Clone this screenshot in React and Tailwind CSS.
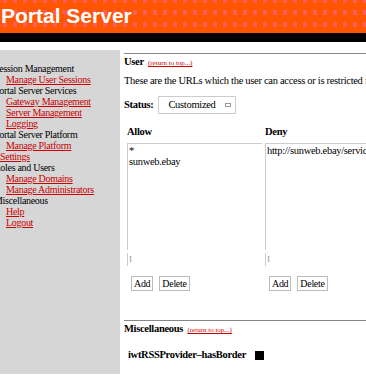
const serif = { fontFamily: '"Liberation Serif", "Times New Roman", serif' };

const SideHead = ({ children }) => (
  <div className="-ml-[6px] text-black whitespace-nowrap">{children}</div>
);

const SideLink = ({ children }) => (
  <div className="indent-[6px]">
    <a href="#" className="text-[#cc0000] underline">{children}</a>
  </div>
);

const ReturnTop = () => (
  <a href="#" className="ml-[2px] text-[7px] tracking-normal font-normal text-[#cc0000] underline">(return to top...)</a>
);

const Btn = ({ children }) => (
  <button className="h-[15px] px-[2px] border border-[#bbbbbb] bg-white text-[10px] tracking-[-0.3px] leading-none text-black">
    {children}
  </button>
);

const ListColumn = ({ title, items, width }) => (
  <div className="flex flex-col shrink-0" style={{ width }}>
    <div className="font-bold h-[12px] leading-[12px]">{title}</div>
    <div className="mt-[5px] h-[107px] border-t border-l border-[#cccccc] pt-[1px] pl-[1px] leading-[11px] whitespace-nowrap overflow-hidden">
      {items.map((it) => (
        <div key={it}>{it}</div>
      ))}
    </div>
    <div className="mt-[3px] h-[13px] w-[8px] border-l border-[#cccccc] text-[#999] pl-[1px] leading-[13px] text-[9px]">I</div>
    <div className="mt-[10px] ml-[4px] flex gap-[6px]">
      <Btn>Add</Btn>
      <Btn>Delete</Btn>
    </div>
  </div>
);

export default function App() {
  return (
    <div className="w-[366px] h-[378px] overflow-hidden bg-white text-black" style={serif}>
      {/* Banner */}
      <div className="relative h-[33px] bg-[#ff5500] overflow-hidden">
        <svg className="absolute inset-0" width="366" height="33">
          <defs>
            <pattern id="dots" x="3" y="-2" width="10" height="12" patternUnits="userSpaceOnUse">
              <rect x="0" y="0" width="4" height="5" fill="#ff5c5c" />
            </pattern>
          </defs>
          <rect width="366" height="33" fill="url(#dots)" />
        </svg>
        <div
          className="relative pl-[1px] pt-[3px] text-white font-bold text-[21px] leading-[26px]"
          style={{ fontFamily: '"Liberation Sans", Arial, sans-serif' }}
        >
          Portal Server
        </div>
      </div>
      <div className="h-[9px] bg-black" />

      <div className="flex mt-[8px]">
        {/* Sidebar */}
        <div className="w-[120px] h-[324px] shrink-0 bg-[#d6d6d6] pt-[13px] text-[10px] tracking-[-0.3px] leading-[11px] overflow-hidden">
          <div className="w-[100px]">
            <SideHead>Session Management</SideHead>
            <SideLink>Manage User Sessions</SideLink>
            <SideHead>Portal Server Services</SideHead>
            <SideLink>Gateway Management</SideLink>
            <SideLink>Server Management</SideLink>
            <SideLink>Logging</SideLink>
            <SideHead>Portal Server Platform</SideHead>
            <SideLink>Manage Platform Settings</SideLink>
            <SideHead>Roles and Users</SideHead>
            <SideLink>Manage Domains</SideLink>
            <SideLink>Manage Administrators</SideLink>
            <SideHead>Miscellaneous</SideHead>
            <SideLink>Help</SideLink>
            <SideLink>Logout</SideLink>
          </div>
        </div>

        {/* Content */}
        <div className="flex-1 min-w-0 pl-[4px] pt-[3px] text-[10.5px] tracking-[-0.3px] leading-[12px] overflow-hidden">
          <div className="border-t border-[#888888]" />
          <div className="mt-[2px] font-bold">
            User <ReturnTop />
          </div>
          <div className="mt-[6px] whitespace-nowrap">
            These are the URLs which the user can access or is restricted from accessing.
          </div>
          <div className="mt-[9px] flex items-center">
            <span className="font-bold">Status:</span>
            <div className="ml-[5px] w-[78px] h-[18px] border border-[#cccccc] flex items-center justify-between pl-[9px] pr-[4px]">
              <span>Customized</span>
              <span className="w-[6px] h-[4px] border border-[#999999]" />
            </div>
          </div>
          <div className="mt-[12px] ml-[3px] flex gap-[3px]">
            <ListColumn title="Allow" items={["*", "sunweb.ebay"]} width={135} />
            <ListColumn title="Deny" items={["http://sunweb.ebay/services"]} width={110} />
          </div>
          <div className="mt-[29px] border-t border-[#888888]" />
          <div className="mt-[2px] font-bold">
            Miscellaneous <ReturnTop />
          </div>
          <div className="mt-[13px] ml-[4px] flex items-center">
            <span className="font-bold">iwtRSSProvider–hasBorder</span>
            <span className="ml-[9px] w-[9px] h-[9px] bg-black" />
          </div>
        </div>
      </div>
    </div>
  );
}
